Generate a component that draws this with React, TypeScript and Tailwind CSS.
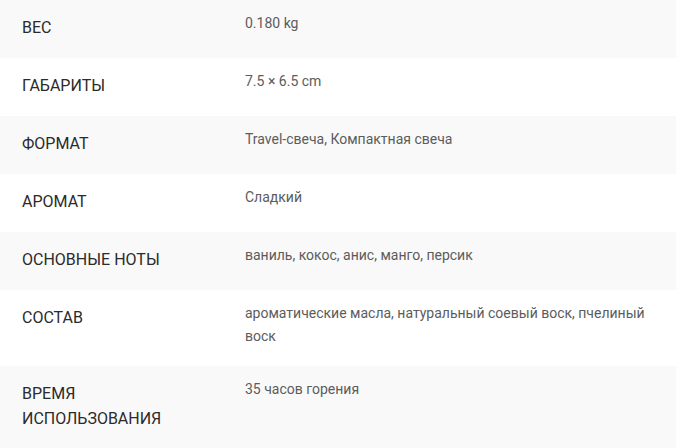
const specs: { label: string; value: string }[] = [
  { label: 'Вес', value: '0.180 kg' },
  { label: 'Габариты', value: '7.5 × 6.5 cm' },
  { label: 'Формат', value: 'Travel-свеча, Компактная свеча' },
  { label: 'Аромат', value: 'Сладкий' },
  { label: 'Основные ноты', value: 'ваниль, кокос, анис, манго, персик' },
  { label: 'Состав', value: 'ароматические масла, натуральный соевый воск, пчелиный воск' },
  { label: 'Время использования', value: '35 часов горения' },
];

export default function App() {
  return (
    <div className="w-[676px] bg-white font-['Roboto','Noto_Sans',sans-serif]">
      {specs.map((row, i) => (
        <div
          key={row.label}
          className={`grid grid-cols-[245px_1fr] pt-3 pb-[18px] ${i % 2 === 0 ? 'bg-[#f9f9f9]' : 'bg-white'}`}
        >
          <div className="pl-[22px] pr-[50px] pt-[3px] text-[16px] leading-[25px] uppercase text-[#2b2b2b]">
            {row.label}
          </div>
          <div className="pr-5 text-[14px] leading-[23px] text-[#5c5c5c]">{row.value}</div>
        </div>
      ))}
    </div>
  );
}
